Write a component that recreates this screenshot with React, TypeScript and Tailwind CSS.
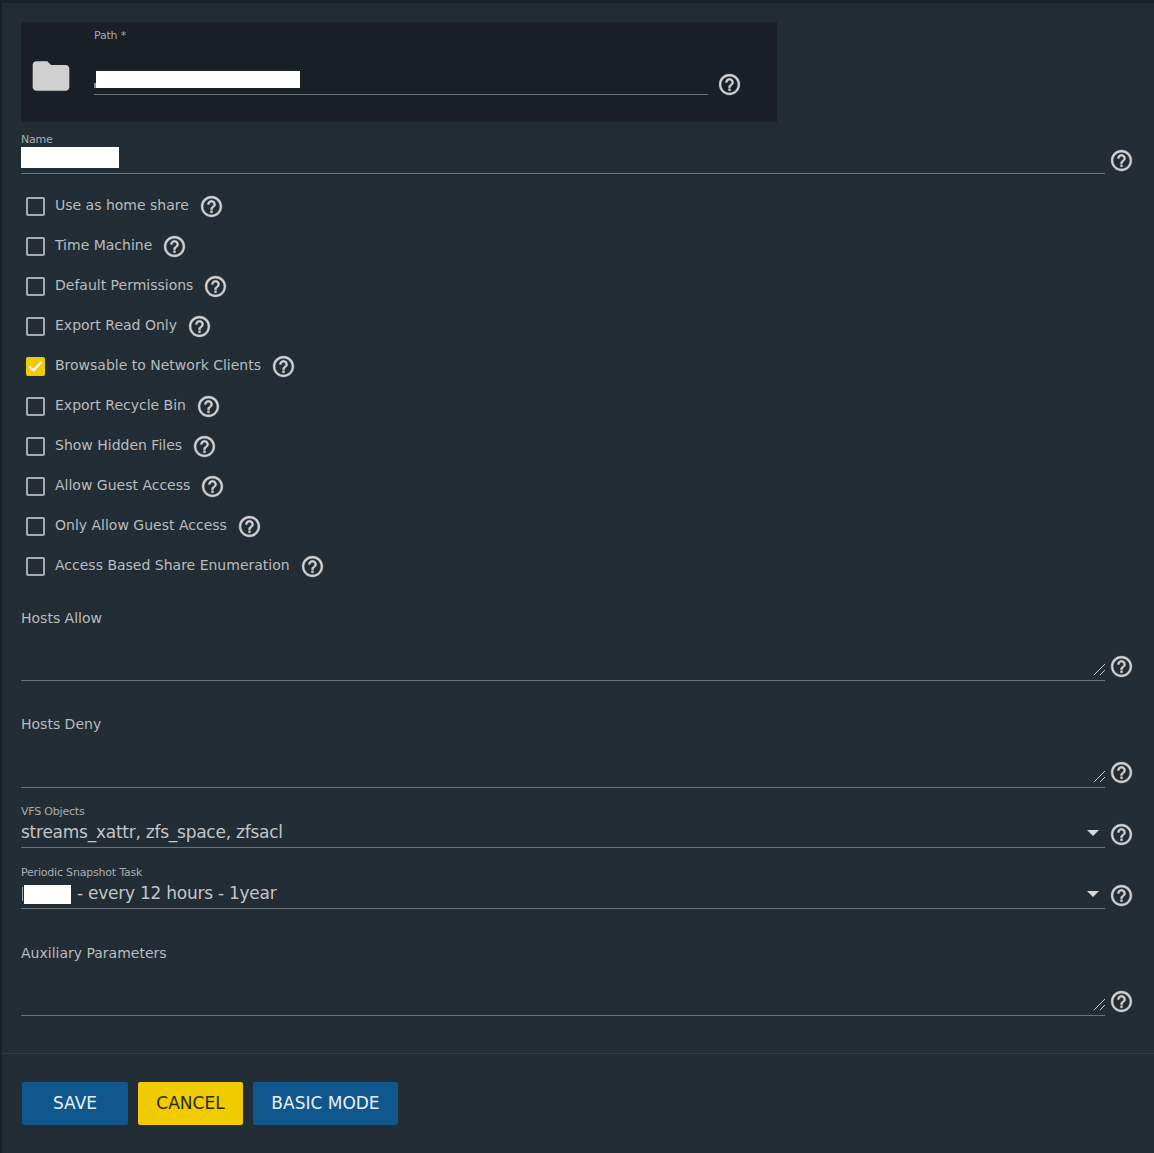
const HELP = "M11 18h2v-2h-2v2zm1-16C6.48 2 2 6.48 2 12s4.48 10 10 10 10-4.48 10-10S17.52 2 12 2zm0 18c-4.41 0-8-3.59-8-8s3.59-8 8-8 8 3.59 8 8-3.59 8-8 8zm0-14c-2.21 0-4 1.79-4 4h2c0-1.1.9-2 2-2s2 .9 2 2c0 2-3 1.75-3 5h2c0-2.25 3-2.5 3-5 0-2.21-1.79-4-4-4z";

function Help({ className = "" }: { className?: string }) {
  return (
    <svg viewBox="0 0 24 24" className={`w-[25px] h-[25px] shrink-0 fill-[#d0d0d0] stroke-[#d0d0d0] stroke-[0.35] ${className}`}>
      <path d={HELP} />
    </svg>
  );
}

function Check({ label, checked = false }: { label: string; checked?: boolean }) {
  return (
    <div className="h-10 flex items-center pl-[5px]">
      <div
        className={`w-[19px] h-[19px] rounded-[2px] flex items-center justify-center shrink-0 ${
          checked ? "bg-[#f0cb00]" : "border-2 border-[#a8abad]"
        }`}
      >
        {checked && (
          <svg viewBox="0 0 19 19" className="w-[19px] h-[19px]">
            <path d="M3.5 9.5 L7.5 13.5 L15.5 5" fill="none" stroke="#fff" strokeWidth="2" />
          </svg>
        )}
      </div>
      <span className="ml-[10px] mr-[10px] text-[14px] tracking-normal leading-none -mt-[3px] text-[#b9bcbf]">{label}</span>
      <Help />
    </div>
  );
}

function Grip() {
  return (
    <svg viewBox="0 0 12 12" className="absolute right-0 bottom-[5px] w-3 h-3">
      <path d="M1 12 L12 1 M7 12 L12 7" stroke="#c8c8c8" strokeWidth="1" fill="none" />
    </svg>
  );
}

function Area({ label, className, box, help }: { label: string; className: string; box: string; help: string }) {
  return (
    <div className={`flex items-end ${className}`}>
      <div className={`relative w-[1084px] border-b border-[#6b7278] ${box}`}>
        <div className="-mt-[1px] text-[14px] tracking-normal leading-5 text-[#b9bcbf]">{label}</div>
        <Grip />
      </div>
      <Help className={`ml-[4px] ${help}`} />
    </div>
  );
}

function Select({ label, children, className }: { label: string; children: React.ReactNode; className: string }) {
  return (
    <div className={`flex items-end ${className}`}>
      <div className="w-[1084px] h-[46px] pt-[3px] border-b border-[#6b7278] relative">
        <div className="text-[11px] leading-[14px] text-[#a9adb0]">{label}</div>
        <div className="flex items-center h-[26px] pt-[2px] text-[17px] tracking-[-0.25px] text-[#c2c5c7]">{children}</div>
        <svg viewBox="0 0 12 6" className="absolute right-[6px] top-[28px] w-3 h-[6px]">
          <path d="M0 0 H12 L6 6 Z" fill="#d8d8d8" />
        </svg>
      </div>
      <Help className="ml-[4px] mb-[1px]" />
    </div>
  );
}

function Btn({ children, className }: { children: string; className: string }) {
  return (
    <button className={`h-[43px] rounded-[2px] text-[17px] tracking-normal flex items-center justify-center ${className}`}>
      {children}
    </button>
  );
}

export default function App() {
  return (
    <div className="min-h-[1153px] bg-[#1a2027] pl-[2px] pt-[3px] overflow-hidden font-['DejaVu_Sans','Open_Sans',sans-serif] tracking-[-0.2px]">
      <div className="h-[1150px] bg-[#232d35]">
        <div className="pl-[19px] pt-[19px]">
          <div className="w-[756px] h-[100px] bg-[#1a2027] flex">
            <svg viewBox="0 0 24 24" className="w-[44px] h-[44px] ml-[8px] mt-[32px] shrink-0 fill-[#d0d0d0]">
              <path d="M10 4H4c-1.1 0-1.99.9-1.99 2L2 18c0 1.1.9 2 2 2h16c1.1 0 2-.9 2-2V8c0-1.1-.9-2-2-2h-8l-2-2z" />
            </svg>
            <div className="ml-[21px] mt-[7px] w-[614px] h-[66px] border-b border-[#6b7278]">
              <div className="text-[11px] leading-[14px] text-[#a9adb0]">Path *</div>
              <div className="mt-[28px] flex items-end">
                <span className="w-[2px] h-[5px] bg-[#8a8f93]" />
                <span className="w-[204px] h-[17px] bg-white" />
              </div>
            </div>
            <Help className="ml-[9px] mt-[50px]" />
          </div>

          <div className="flex items-end mt-[9px]">
            <div className="w-[1084px] h-[43px] pt-[1px] border-b border-[#6b7278]">
              <div className="text-[11px] leading-[15px] text-[#a9adb0]">Name</div>
              <div className="w-[98px] h-[21px] bg-white" />
            </div>
            <Help className="ml-[4px] mb-[1px]" />
          </div>

          <div className="mt-3">
            <Check label="Use as home share" />
            <Check label="Time Machine" />
            <Check label="Default Permissions" />
            <Check label="Export Read Only" />
            <Check label="Browsable to Network Clients" checked />
            <Check label="Export Recycle Bin" />
            <Check label="Show Hidden Files" />
            <Check label="Allow Guest Access" />
            <Check label="Only Allow Guest Access" />
            <Check label="Access Based Share Enumeration" />
          </div>

          <Area label="Hosts Allow" className="mt-[23px]" box="h-[72px]" help="mb-[2px]" />
          <Area label="Hosts Deny" className="mt-[34px]" box="h-[73px]" help="mb-[3px]" />
          <Select label="VFS Objects" className="mt-[14px]">
            streams_xattr, zfs_space, zfsacl
          </Select>
          <Select label="Periodic Snapshot Task" className="mt-[15px]">
            <span className="w-[1px] h-[14px] ml-[1px] bg-[#9ea2a5]" />
            <span className="w-[47px] h-[19px] ml-[1px] bg-white mr-[6px]" />
            - every 12 hours - 1year
          </Select>
          <Area label="Auxiliary Parameters" className="mt-[35px]" box="h-[72px]" help="mb-[2px]" />
        </div>

        <div className="mt-[37px] border-t border-[#323c44] pl-5 pt-7 flex gap-[10px]">
          <Btn className="w-[106px] bg-[#0f578d] text-[#e8f0f6]">SAVE</Btn>
          <Btn className="w-[105px] bg-[#f0cb00] text-[#2a2a10]">CANCEL</Btn>
          <Btn className="w-[145px] bg-[#0f578d] text-[#e8f0f6]">BASIC MODE</Btn>
        </div>
      </div>
    </div>
  );
}
